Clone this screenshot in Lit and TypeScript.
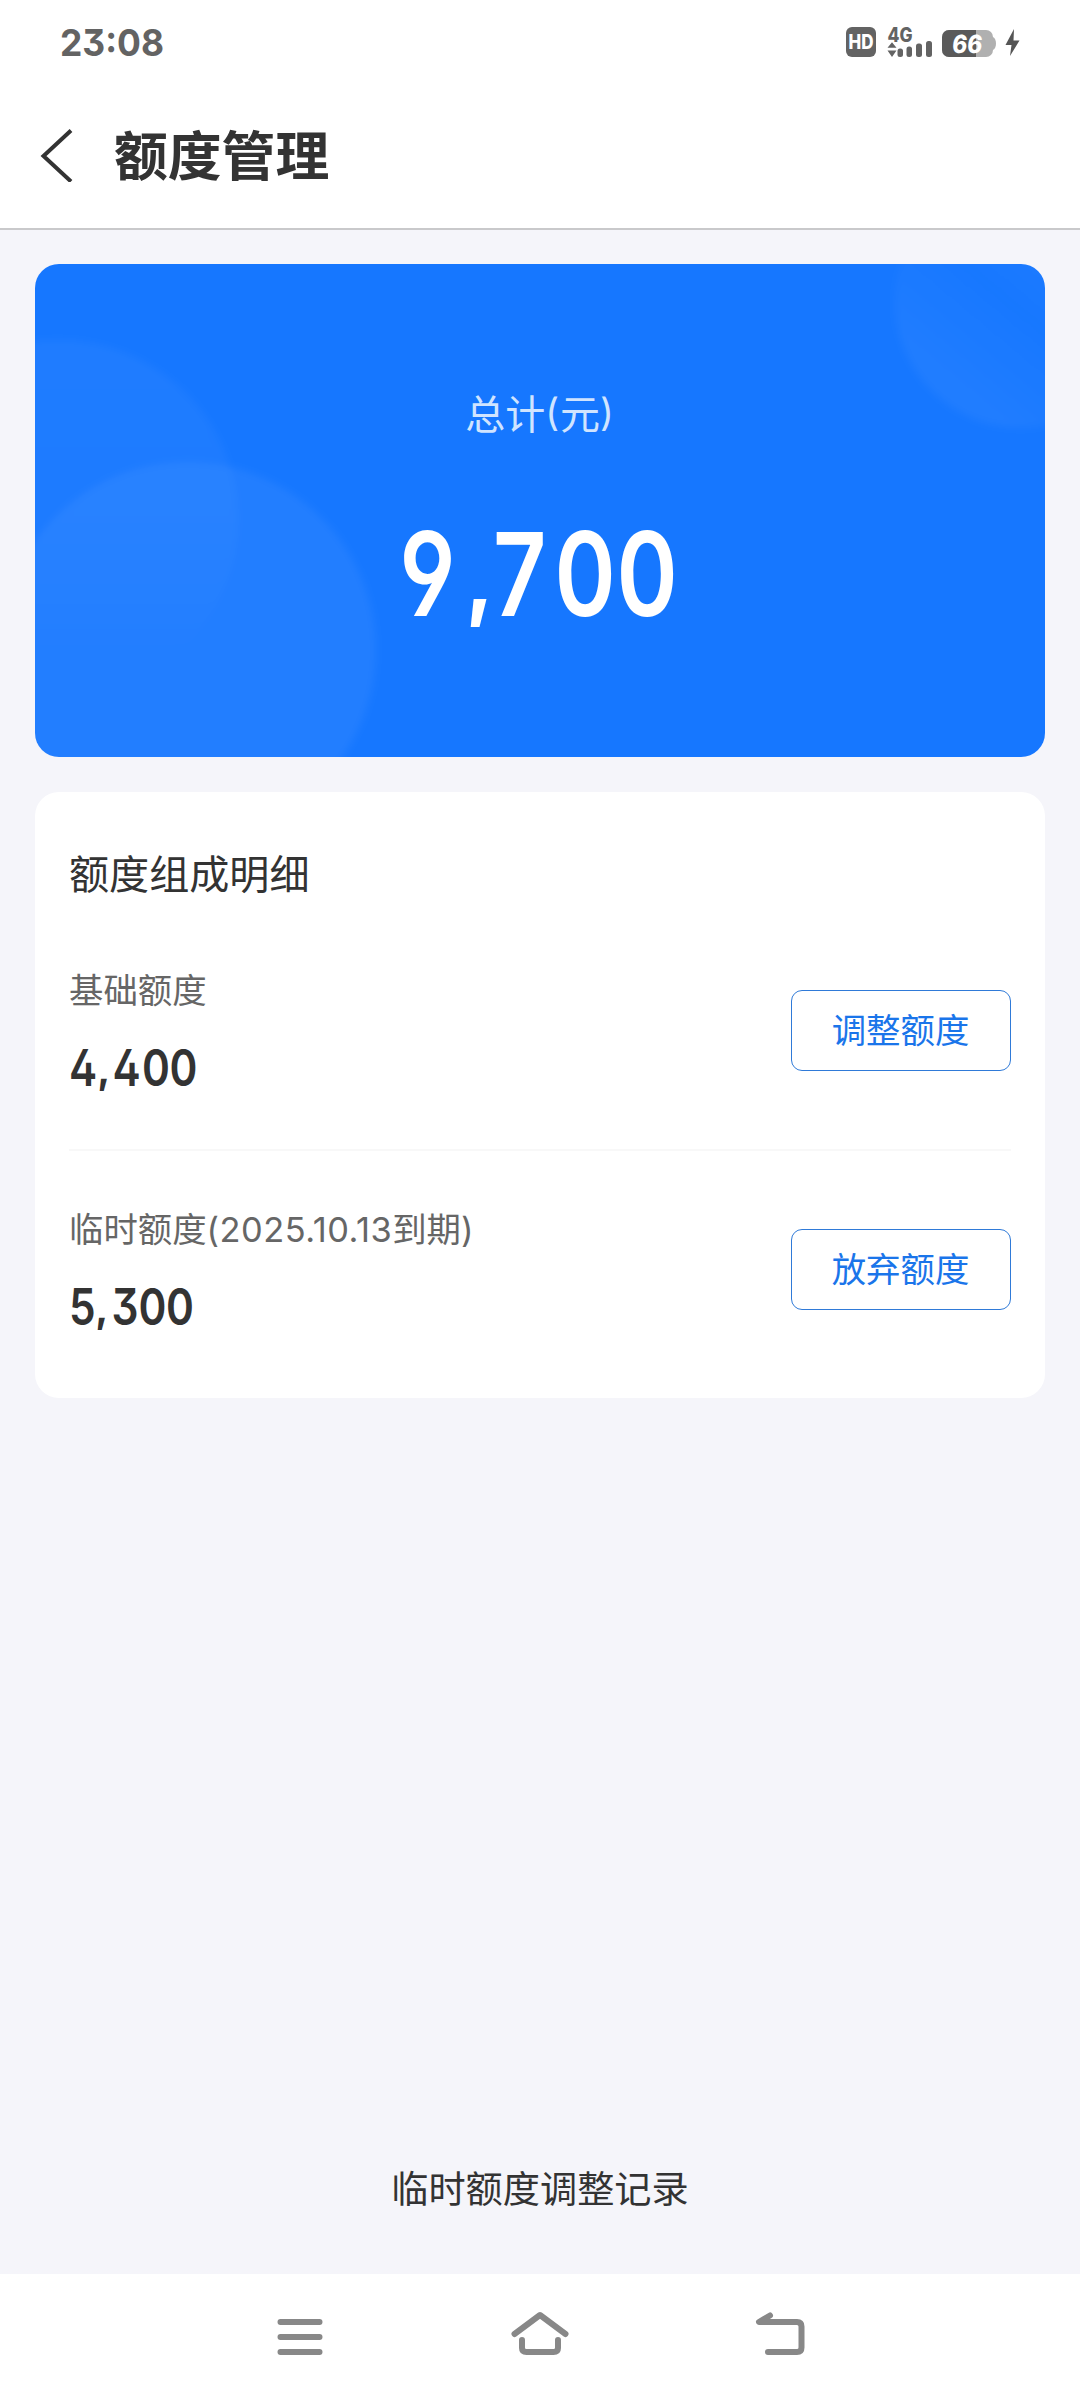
import { LitElement, html, css, svg } from "lit";
import { customElement, property } from "lit/decorators.js";

@customElement("fit-number")
class FitNumber extends LitElement {
  @property() value = "";
  @property({ type: Number }) width = 100;
  @property({ type: Number }) size = 40;
  @property({ type: Number }) squeeze = 1;
  @property() xs = "";
  static styles = css`
    :host { display: block; line-height: 0; }
    svg { display: block; overflow: visible; }
    text {
      font-family: Inter, Roboto, sans-serif;
      font-weight: inherit;
      font-feature-settings: "cv03", "cv04", "ss01";
      fill: currentColor;
    }
    .comma { font-weight: 900; }
  `;
  render() {
    const h = Math.round(this.size * 0.727);
    if (!this.xs) {
      return html`<svg width=${this.width} height=${h}>
        ${svg`<text x="0" y=${h} font-size=${this.size} textLength=${this.width} lengthAdjust="spacingAndGlyphs">${this.value}</text>`}
      </svg>`;
    }
    const xs = this.xs.split(",").map((v) => Number(v) / this.squeeze);
    return html`<svg width=${this.width} height=${h}>
      ${svg`<text transform=${`scale(${this.squeeze} 1)`} font-size=${this.size}>${[...this.value].map((c, i) =>
        c === ","
          ? svg`<tspan class="comma" x=${xs[i]} y=${h - this.size * 0.06} font-size=${this.size * 0.74}>${c}</tspan>`
          : svg`<tspan x=${xs[i]} y=${h}>${c}</tspan>`
      )}</text>`}
    </svg>`;
  }
}

@customElement("status-bar")
class StatusBar extends LitElement {
  static styles = css`
    :host { display: flex; justify-content: space-between; align-items: flex-start; height: 84px; padding: 0 60px; box-sizing: border-box; color: #636363; }
    .time { padding-top: 29px; font-weight: 700; }
    .icons { display: block; margin-top: 20px; }
    text { font-family: Inter, Roboto, sans-serif; font-weight: 800; }
  `;
  render() {
    return html`
      <fit-number class="time" value="23:08" width="104" size="37.5"></fit-number>
      <svg class="icons" width="180" height="44" viewBox="840 20 180 44">
        <rect x="846" y="27" width="30" height="30" rx="6" fill="#636363" />
        <text x="848.5" y="49" font-size="19.500" textLength="25" lengthAdjust="spacingAndGlyphs" fill="#fff">HD</text>
        <text x="887.5" y="41.500" font-size="19.500" textLength="25" lengthAdjust="spacingAndGlyphs" fill="#636363">4G</text>
        <path d="M887.500 47.800L892 42.300L896.500 47.800ZM887.500 50.500H896.500L892 57Z" fill="#636363" />
        <g fill="#636363">
          <rect x="897.500" y="48.500" width="5.500" height="8.500" rx="2.500" />
          <rect x="906.500" y="46.500" width="5.500" height="10.500" rx="2.500" />
          <rect x="916" y="43.500" width="6" height="13.500" rx="2.500" />
          <rect x="926" y="41" width="6" height="16" rx="2.500" />
        </g>
        <rect x="942" y="30" width="51" height="27" rx="7" fill="#b0b0b0" />
        <path d="M993 37C997 39 997 48 993 50Z" fill="#b0b0b0" />
        <path d="M949 30H976V57H949A7 7 0 0 1 942 50V37A7 7 0 0 1 949 30Z" fill="#5a5a5a" />
        <text transform="translate(951.500 53) skewX(-6)" font-size="25" textLength="30" lengthAdjust="spacingAndGlyphs" fill="#fff">66</text>
        <path d="M1014 29L1005.500 45H1011.500L1010 56L1019.500 40.500H1013.500Z" fill="#555" />
      </svg>
    `;
  }
}

@customElement("quota-row")
class QuotaRow extends LitElement {
  @property() label = "";
  @property() date = "";
  @property() tail = "";
  @property() amount = "";
  @property() xs = "";
  @property() action = "";
  static styles = css`
    :host { display: flex; justify-content: space-between; align-items: flex-start; }
    .label { display: flex; align-items: baseline; height: 50px; line-height: 50px; font-size: 34.4px; color: #666; white-space: nowrap; }
    .date { font-family: Inter, sans-serif; letter-spacing: 0.5px; }
    .amount { margin-top: 36px; color: #333; font-weight: 600; }
    button {
      width: 220px; height: 81px; margin-top: 27px; padding: 0 1px 5px 0; box-sizing: border-box;
      border: 1px solid #2f7ad8; border-radius: 11px; background: #fff; color: #1a75ea;
      font: 400 34.4px/50px "Noto Sans CJK SC", sans-serif;
    }
  `;
  render() {
    return html`
      <div>
        <div class="label">${this.label}<span class="date">${this.date}</span>${this.tail}<span class="date">${this.date ? ")" : ""}</span></div>
        <fit-number class="amount" value=${this.amount} width="126" size="51" squeeze="0.83" xs=${this.xs}></fit-number>
      </div>
      <button>${this.action}</button>
    `;
  }
}

@customElement("app-root")
class AppRoot extends LitElement {
  static styles = css`
    :host {
      display: flex; flex-direction: column; width: 1080px; height: 2400px; overflow: hidden;
      background: #f5f5fa; color: #333; font-family: "Noto Sans CJK SC", sans-serif;
    }
    header { flex: none; height: 230px; box-sizing: border-box; background: #fff; border-bottom: 2px solid #c9c9cb; }
    .bar { display: flex; align-items: center; height: 142px; padding-left: 40px; }
    h1 { margin: 0 0 5px 40px; font-size: 53.8px; line-height: 80px; font-weight: 700; }
    main { flex: 1; display: flex; flex-direction: column; align-items: center; padding: 34px 35px 0; }
    .total { position: relative; width: 1010px; height: 493px; border-radius: 24px; overflow: hidden; background: #1677ff; display: flex; flex-direction: column; align-items: center; }
    .bg { position: absolute; left: 0; top: 0; }
    .caption { position: relative; margin-top: 118px; font-size: 40px; line-height: 60px; color: #d0e4ff; display: flex; }
    .paren { font-family: Inter, sans-serif; font-size: 38px; letter-spacing: 0.8px; }
    .sum { position: relative; margin-top: 90px; color: #fff; font-weight: 600; }
    .details { width: 1010px; height: 606px; margin-top: 35px; padding: 50px 34px 0 34px; box-sizing: border-box; border-radius: 24px; background: #fff; }
    h2 { margin: 0 0 61px; font-size: 40.1px; line-height: 60px; font-weight: 400; }
    .rule { height: 2px; margin: 63px 0 51px; background: #f8f8f8; }
    .record { margin-top: auto; padding-bottom: 59px; font-size: 37.2px; line-height: 56px; }
    nav { flex: none; height: 126px; background: #fff; display: flex; justify-content: center; gap: 180px; padding-top: 32px; box-sizing: border-box; }
    nav svg { fill: none; stroke: #888; stroke-width: 6; stroke-linecap: round; stroke-linejoin: round; }
  `;
  render() {
    return html`
      <header>
        <status-bar></status-bar>
        <div class="bar">
          <svg width="34" height="54" viewBox="40 128 34 54" fill="none" stroke="#333" stroke-width="4"><path d="M71 130.500L43.500 156L71 181.500" /></svg>
          <h1>额度管理</h1>
        </div>
      </header>
      <main>
        <section class="total">
          <svg class="bg" width="1010" height="493" viewBox="35 264 1010 493">
            <defs>
              <linearGradient id="back" x1="0" y1="0" x2="0" y2="1">
                <stop offset="0" stop-color="#fff" stop-opacity="0.040" />
                <stop offset="0.500" stop-color="#fff" stop-opacity="0.030" />
                <stop offset="0.950" stop-color="#fff" stop-opacity="0" />
              </linearGradient>
              <linearGradient id="arc" x1="0.2" y1="0.8" x2="0.7" y2="0.2">
                <stop offset="0" stop-color="#fff" stop-opacity="0.045" />
                <stop offset="0.500" stop-color="#fff" stop-opacity="0.005" />
                <stop offset="1" stop-color="#fff" stop-opacity="0.040" />
              </linearGradient>
              <filter id="soft"><feGaussianBlur stdDeviation="3.500" /></filter>
            </defs>
            <g filter="url(#soft)">
              <circle cx="58" cy="520" r="180" fill="url(#back)" />
              <circle cx="188" cy="650" r="188" fill="#fff" fill-opacity="0.050" />
              <circle cx="1021" cy="302" r="126" fill="url(#arc)" />
            </g>
          </svg>
          <div class="caption">总计<span class="paren">(</span>元<span class="paren">)</span></div>
          <fit-number class="sum" value="9,700" width="276" size="116" squeeze="0.8" xs="-2.5,65,91,152.5,214.5"></fit-number>
        </section>
        <section class="details">
          <h2>额度组成明细</h2>
          <quota-row label="基础额度" amount="4,400" xs="0,29,43.5,73,100.5" action="调整额度"></quota-row>
          <div class="rule"></div>
          <quota-row label="临时额度" date="(2025.10.13" tail="到期" amount="5,300" xs="0,27,42.5,69.500,97" action="放弃额度"></quota-row>
        </section>
        <div class="record">临时额度调整记录</div>
      </main>
      <nav>
        <svg width="60" height="60" viewBox="270 2306 60 60"><path d="M280.500 2322H319.500M280.500 2337H319.500M280.500 2352H319.500" /></svg>
        <svg width="60" height="60" viewBox="510 2306 60 60"><path d="M514.500 2334L540 2315L565.500 2334M522 2340V2348Q522 2352 526.500 2352H553.500Q558 2352 558 2348V2340" /></svg>
        <svg width="60" height="60" viewBox="750 2306 60 60"><path d="M770 2315.500L759 2322H797Q801.500 2322 801.500 2326.500V2347.500Q801.500 2352 797 2352H768" /></svg>
      </nav>
    `;
  }
}
